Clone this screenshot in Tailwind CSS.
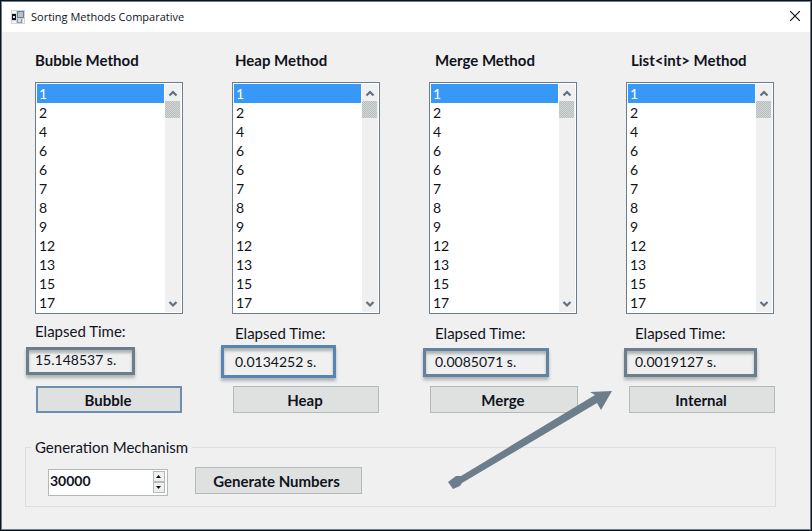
<!DOCTYPE html>
<html lang="en">
<head>
<meta charset="utf-8">
<title>Sorting Methods Comparative</title>
<script src="https://cdn.jsdelivr.net/npm/@tailwindcss/browser@4"></script>
</head>
<body class="bg-[#10131c] font-['Lato','Noto_Sans',sans-serif] text-[15px] leading-5 text-[#10131c]">
<svg class="hidden">
  <symbol id="up" viewBox="0 0 16 16"><path d="M4.500 10.500 8 7 11.500 10.500" fill="none" stroke="#5f7080" stroke-width="2.200"/></symbol>
  <symbol id="down" viewBox="0 0 16 16"><path d="M4.500 6 8 9.500 11.500 6" fill="none" stroke="#5f7080" stroke-width="2.200"/></symbol>
</svg>
<div class="min-h-screen border border-[#10131c]">
<div class="relative flex min-h-[529px] flex-col border border-[#6c7d8c] bg-[#f0f0f0]">
  <header class="flex h-[30px] items-center gap-[6px] bg-white pr-[7px] pl-[9px] font-['Open_Sans','Noto_Sans',sans-serif] text-[11px]">
    <svg class="h-[14px] w-[14px]" viewBox="0 0 14 14" aria-hidden="true">
      <rect width="14" height="14" fill="#cfd4d8"/>
      <rect x="1" y="1" width="4" height="2" fill="#f4f6f7"/><rect x="1" y="11" width="4" height="2" fill="#f4f6f7"/>
      <rect x="1" y="4" width="4" height="6" fill="#10131c"/><rect x="2" y="6" width="2" height="2" fill="#dfe5ea"/>
      <rect x="6.500" y="1.500" width="6" height="6" fill="#b7c3cc" stroke="#6c7d8c"/>
      <rect x="6" y="9" width="5" height="4" fill="#8d9aa5"/><rect x="7" y="9" width="3" height="3" fill="#d5dbe0"/>
      <rect x="12" y="9" width="1" height="4" fill="#f4f6f7"/>
    </svg>
    <h1 class="grow">Sorting Methods Comparative</h1>
    <button aria-label="Close" class="flex h-5 w-4 items-start justify-center pt-1"><svg class="h-[10px] w-[10px]" viewBox="0 0 10 10"><path d="M0 0 10 10M10 0 0 10" stroke="#10131c" stroke-width="1.200"/></svg></button>
  </header>

  <main class="flex grow flex-col pt-[18px] pr-9 pl-[33px]">
    <div class="grid grid-cols-4 gap-[49px]">
      <section class="flex flex-col">
        <h2 class="whitespace-nowrap font-bold"><label for="l1">Bubble Method</label></h2>
        <div class="mt-3 flex h-[232px] border border-[#6c7d8c] bg-white p-px">
          <select id="l1" size="12" class="mr-px w-full min-w-0 grow overflow-hidden text-sm outline-none [scrollbar-width:none] [&_option]:h-[19px] [&_option]:min-h-[19px] [&_option]:p-0 [&_option]:pl-[2px] [&_option]:pt-px [&_option]:leading-[19px] [&_option:checked]:bg-linear-to-r [&_option:checked]:from-[#3898f8] [&_option:checked]:to-[#3898f8] [&_option:checked]:[-webkit-text-fill-color:white]">
            <option selected>1</option><option>2</option><option>4</option><option>6</option><option>6</option><option>7</option><option>8</option><option>9</option><option>12</option><option>13</option><option>15</option><option>17</option>
          </select>
          <div class="flex w-4 shrink-0 flex-col bg-[#f0f0f0]">
            <button aria-label="Scroll up" class="h-[17px]"><svg class="h-4 w-4"><use href="#up"/></svg></button>
            <div class="h-[17px] w-[15px] bg-[repeating-conic-gradient(#b8bebe_0_25%,#d2d6d6_0_50%)] bg-size-[2px_2px]"></div>
            <button aria-label="Scroll down" class="mt-auto h-[17px]"><svg class="h-4 w-4"><use href="#down"/></svg></button>
          </div>
        </div>
        <p class="mt-[7px]">Elapsed Time:</p>
        <div class="relative mt-[9px] h-5 text-sm"><output>15.148537 s.</output><span class="absolute -top-[3px] -left-[9px] h-7 w-[109px] border-3 border-[#6c7d8c] shadow-[0_3px_3px_#aeb4b4,inset_0_3px_3px_#aeb4b4]"></span></div>
        <button class="mt-4 mr-px ml-px h-[27px] border-2 border-[#6c8fae] bg-[#dfe1e1] pr-[2px] font-bold">Bubble</button>
      </section>

      <section class="flex flex-col">
        <h2 class="ml-[3px] whitespace-nowrap font-bold"><label for="l2">Heap Method</label></h2>
        <div class="mt-3 flex h-[232px] border border-[#6c7d8c] bg-white p-px">
          <select id="l2" size="12" class="mr-px w-full min-w-0 grow overflow-hidden text-sm outline-none [scrollbar-width:none] [&_option]:h-[19px] [&_option]:min-h-[19px] [&_option]:p-0 [&_option]:pl-[2px] [&_option]:pt-px [&_option]:leading-[19px] [&_option:checked]:bg-linear-to-r [&_option:checked]:from-[#3898f8] [&_option:checked]:to-[#3898f8] [&_option:checked]:[-webkit-text-fill-color:white]">
            <option selected>1</option><option>2</option><option>4</option><option>6</option><option>6</option><option>7</option><option>8</option><option>9</option><option>12</option><option>13</option><option>15</option><option>17</option>
          </select>
          <div class="flex w-4 shrink-0 flex-col bg-[#f0f0f0]">
            <button aria-label="Scroll up" class="h-[17px]"><svg class="h-4 w-4"><use href="#up"/></svg></button>
            <div class="h-[17px] w-[15px] bg-[repeating-conic-gradient(#b8bebe_0_25%,#d2d6d6_0_50%)] bg-size-[2px_2px]"></div>
            <button aria-label="Scroll down" class="mt-auto h-[17px]"><svg class="h-4 w-4"><use href="#down"/></svg></button>
          </div>
        </div>
        <p class="mt-[9px] ml-[3px]">Elapsed Time:</p>
        <div class="relative mt-[9px] ml-[3px] h-5 text-sm"><output>0.0134252 s.</output><span class="absolute -top-[7px] -left-[14px] h-[33px] w-[115px] border-3 border-[#5684b4] shadow-[0_3px_3px_#aeb4b4,inset_0_3px_3px_#aeb4b4]"></span></div>
        <button class="mt-[14px] mr-px ml-px h-[27px] border border-[#b4baba] bg-[#dfe1e1] pr-[2px] font-bold">Heap</button>
      </section>

      <section class="flex flex-col">
        <h2 class="ml-[6px] whitespace-nowrap font-bold"><label for="l3">Merge Method</label></h2>
        <div class="mt-3 flex h-[232px] border border-[#6c7d8c] bg-white p-px">
          <select id="l3" size="12" class="mr-px w-full min-w-0 grow overflow-hidden text-sm outline-none [scrollbar-width:none] [&_option]:h-[19px] [&_option]:min-h-[19px] [&_option]:p-0 [&_option]:pl-[2px] [&_option]:pt-px [&_option]:leading-[19px] [&_option:checked]:bg-linear-to-r [&_option:checked]:from-[#3898f8] [&_option:checked]:to-[#3898f8] [&_option:checked]:[-webkit-text-fill-color:white]">
            <option selected>1</option><option>2</option><option>4</option><option>6</option><option>6</option><option>7</option><option>8</option><option>9</option><option>12</option><option>13</option><option>15</option><option>17</option>
          </select>
          <div class="flex w-4 shrink-0 flex-col bg-[#f0f0f0]">
            <button aria-label="Scroll up" class="h-[17px]"><svg class="h-4 w-4"><use href="#up"/></svg></button>
            <div class="h-[17px] w-[15px] bg-[repeating-conic-gradient(#b8bebe_0_25%,#d2d6d6_0_50%)] bg-size-[2px_2px]"></div>
            <button aria-label="Scroll down" class="mt-auto h-[17px]"><svg class="h-4 w-4"><use href="#down"/></svg></button>
          </div>
        </div>
        <p class="mt-[9px] ml-[6px]">Elapsed Time:</p>
        <div class="relative mt-[9px] ml-[6px] h-5 text-sm"><output>0.0085071 s.</output><span class="absolute -top-1 -left-3 h-[29px] w-[126px] border-3 border-[#6482a0] shadow-[0_3px_3px_#aeb4b4,inset_0_3px_3px_#aeb4b4]"></span></div>
        <button class="mt-[14px] -mr-px ml-px h-[27px] border border-[#b4baba] bg-[#dfe1e1] pr-[2px] font-bold">Merge</button>
      </section>

      <section class="flex flex-col">
        <h2 class="ml-[5px] whitespace-nowrap font-bold"><label for="l4">List&lt;int&gt; Method</label></h2>
        <div class="mt-3 flex h-[232px] border border-[#6c7d8c] bg-white p-px">
          <select id="l4" size="12" class="mr-px w-full min-w-0 grow overflow-hidden text-sm outline-none [scrollbar-width:none] [&_option]:h-[19px] [&_option]:min-h-[19px] [&_option]:p-0 [&_option]:pl-[2px] [&_option]:pt-px [&_option]:leading-[19px] [&_option:checked]:bg-linear-to-r [&_option:checked]:from-[#3898f8] [&_option:checked]:to-[#3898f8] [&_option:checked]:[-webkit-text-fill-color:white]">
            <option selected>1</option><option>2</option><option>4</option><option>6</option><option>6</option><option>7</option><option>8</option><option>9</option><option>12</option><option>13</option><option>15</option><option>17</option>
          </select>
          <div class="flex w-4 shrink-0 flex-col bg-[#f0f0f0]">
            <button aria-label="Scroll up" class="h-[17px]"><svg class="h-4 w-4"><use href="#up"/></svg></button>
            <div class="h-[17px] w-[15px] bg-[repeating-conic-gradient(#b8bebe_0_25%,#d2d6d6_0_50%)] bg-size-[2px_2px]"></div>
            <button aria-label="Scroll down" class="mt-auto h-[17px]"><svg class="h-4 w-4"><use href="#down"/></svg></button>
          </div>
        </div>
        <p class="mt-[9px] ml-[9px]">Elapsed Time:</p>
        <div class="relative mt-[9px] ml-[9px] h-5 text-sm"><output>0.0019127 s.</output><span class="absolute -top-1 -left-[11px] h-[29px] w-[133px] border-3 border-[#6c7d8c] shadow-[0_3px_3px_#aeb4b4,inset_0_3px_3px_#aeb4b4]"></span></div>
        <button class="mt-[14px] -mr-px ml-[3px] h-[27px] border border-[#b4baba] bg-[#dfe1e1] pr-[2px] font-bold">Internal</button>
      </section>
    </div>

    <fieldset class="-mr-[2px] -ml-[10px] mt-6 flex h-[70px] items-start border border-[#dddddd] pl-[22px]">
      <legend class="-ml-[17px] px-1">Generation Mechanism</legend>
      <div class="flex items-start gap-[27px] pt-[10px]">
        <div class="mt-[2px] flex h-[27px] w-[120px] border border-[#b4baba] bg-white p-px">
          <input aria-label="Amount of numbers" value="30000" inputmode="numeric" class="h-5 w-full min-w-0 grow text-sm font-bold outline-none">
          <div class="mr-px flex w-[14px] flex-col">
            <button aria-label="Increase" class="flex h-[11px] items-center justify-center border border-[#b4baba] bg-[#f0f0f0]"><svg class="h-[3px] w-[5px]" viewBox="0 0 5 3"><path d="M0 3 2.500 0 5 3Z" fill="#10131c"/></svg></button>
            <button aria-label="Decrease" class="flex h-[11px] items-center justify-center border border-[#b4baba] bg-[#f0f0f0]"><svg class="h-[3px] w-[5px]" viewBox="0 0 5 3"><path d="M0 0 2.500 3 5 0Z" fill="#10131c"/></svg></button>
          </div>
        </div>
        <button class="h-[27px] w-[167px] border border-[#b4baba] bg-[#dfe1e1] pr-1 font-bold whitespace-nowrap">Generate Numbers</button>
      </div>
    </fieldset>
  </main>

  <svg class="pointer-events-none absolute top-[387px] left-[445px] h-[106px] w-[168px]" viewBox="447 389 168 106" aria-hidden="true">
    <path d="M448 482 456 476 461 476 595 395 590 392 612 391 601 410 597 403 462 483 460 486 453 489Z" fill="#6c7d8c"/>
  </svg>
</div>
</div>
</body>
</html>
